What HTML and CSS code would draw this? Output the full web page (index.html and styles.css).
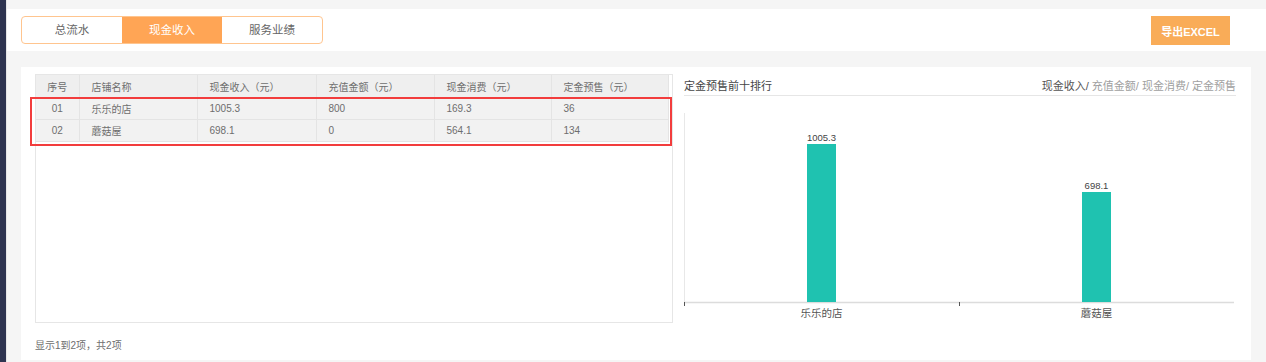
FILE: index.html
```html
<!DOCTYPE html>
<html lang="zh-CN">
<head>
  <meta charset="UTF-8">
  <title>现金收入</title>
  <link rel="stylesheet" href="styles.css">
</head>
<body>
  <div class="layout">
    <div class="sidebar"></div>
    <div class="main">
      <!-- tabs and export -->
      <div class="toolbar">
        <div class="tabs">
          <span class="tab">总流水</span>
          <span class="tab active">现金收入</span>
          <span class="tab">服务业绩</span>
        </div>
        <button class="export">导出EXCEL</button>
      </div>

      <div class="panel">
        <!-- table -->
        <div class="table-side">
          <div class="table-wrap">
            <table class="data">
              <colgroup>
                <col style="width:43px"><col style="width:118px"><col style="width:119px">
                <col style="width:118px"><col style="width:117px"><col style="width:117px">
              </colgroup>
              <thead>
                <tr><th>序号</th><th>店铺名称</th><th>现金收入（元）</th><th>充值金额（元）</th><th>现金消费（元）</th><th>定金预售（元）</th></tr>
              </thead>
              <tbody>
                <tr><td>01</td><td>乐乐的店</td><td>1005.3</td><td>800</td><td>169.3</td><td>36</td></tr>
                <tr><td>02</td><td>蘑菇屋</td><td>698.1</td><td>0</td><td>564.1</td><td>134</td></tr>
              </tbody>
            </table>
            <div class="highlight"></div>
          </div>
          <div class="pager">显示1到2项，共2项</div>
        </div>

        <!-- chart -->
        <div class="chart-side">
          <div class="chart-head">
            <span class="chart-title">定金预售前十排行</span>
            <span class="chart-links"><span class="on">现金收入/</span> 充值金额/ 现金消费/ 定金预售</span>
          </div>
          <svg class="chart" width="552" height="227" viewBox="0 0 552 227">
            <line x1="0.5" y1="17" x2="0.5" y2="206" stroke="#e8e8e8"/>
            <line x1="0" y1="206.5" x2="550" y2="206.5" stroke="#dcdcdc" stroke-width="1.5"/>
            <line x1="0.5" y1="206" x2="0.5" y2="210" stroke="#555"/>
            <line x1="275.5" y1="206" x2="275.5" y2="210" stroke="#555"/>
            <rect x="123" y="48" width="29" height="158" fill="#1fc2b0"/>
            <rect x="398" y="96" width="29" height="110" fill="#1fc2b0"/>
            <text class="val" x="137.5" y="45">1005.3</text>
            <text class="val" x="412.5" y="93">698.1</text>
            <text class="cat" x="137.5" y="221">乐乐的店</text>
            <text class="cat" x="412.5" y="221">蘑菇屋</text>
          </svg>
        </div>
      </div>
    </div>
  </div>
</body>
</html>
```

FILE: styles.css
```css
body {
  margin: 0;
  background-color: #f5f5f5;
  font-family: "Liberation Sans", "Noto Sans CJK SC", sans-serif;
  color: #666666;
}

.layout {
  display: flex;
  height: 362px;
}

.sidebar {
  width: 6px;
  background-color: #2e3450;
}

.main {
  flex: 1;
  padding-top: 9px;
  border-left: 1px solid #e6e6e6;
}

.toolbar {
  height: 42px;
  background-color: #ffffff;
  padding: 0 36px 0 14px;
  display: flex;
  align-items: center;
  justify-content: space-between;
}

.tabs {
  display: flex;
  border: 1px solid #ffc58f;
  border-radius: 4px;
  overflow: hidden;
}

.tab {
  width: 100px;
  height: 26px;
  line-height: 26px;
  text-align: center;
  font-size: 11.5px;
  color: #666666;
}

.tab.active {
  background-color: #ffa555;
  color: #ffffff;
}

.export {
  width: 79px;
  height: 29px;
  border: none;
  background-color: #f9ac58;
  color: #ffffff;
  font-family: inherit;
  font-size: 11px;
  font-weight: bold;
  margin-top: 1px;
  padding: 0;
}

.panel {
  margin: 16px 15px 0 14px;
  height: 293px;
  box-sizing: border-box;
  background-color: #ffffff;
  padding: 7px 15px 0 14px;
  display: flex;
  gap: 11px;
}

.table-side {
  width: 638px;
  display: flex;
  flex-direction: column;
}

.table-wrap {
  position: relative;
  height: 249px;
  box-sizing: border-box;
  border: 1px solid #e6e6e6;
}

.data {
  width: 632px;
  table-layout: fixed;
  border-collapse: collapse;
  font-size: 10px;
}

.data th,
.data td {
  text-align: left;
  padding: 0 0 0 12px;
  border-right: 1px solid #e4e4e4;
  border-bottom: 1px solid #e4e4e4;
  font-weight: normal;
  color: #6e6e6e;
  white-space: nowrap;
}

.data th {
  height: 22px;
  background-color: #efefef;
}

.data td {
  height: 21px;
  background-color: #f2f2f2;
}

.data th:first-child,
.data td:first-child {
  text-align: center;
  padding: 0;
}

.highlight {
  position: absolute;
  left: -6px;
  top: 22px;
  width: 642px;
  height: 49px;
  box-sizing: border-box;
  border: 2px solid #f23d3d;
}

.pager {
  padding-top: 17px;
  font-size: 10px;
  line-height: 12px;
  color: #6e6e6e;
}

.chart-side {
  width: 552px;
}

.chart-head {
  height: 22px;
  box-sizing: border-box;
  border-bottom: 1px solid #e6e6e6;
  display: flex;
  justify-content: space-between;
  align-items: center;
  font-size: 11px;
}

.chart-title {
  color: #444444;
}

.chart-links {
  color: #a0a0a0;
}

.chart-links .on {
  color: #555555;
}

.chart {
  display: block;
}

.chart .val {
  font-size: 9.5px;
  fill: #444444;
  text-anchor: middle;
}

.chart .cat {
  font-size: 10.5px;
  fill: #555555;
  text-anchor: middle;
}
```
